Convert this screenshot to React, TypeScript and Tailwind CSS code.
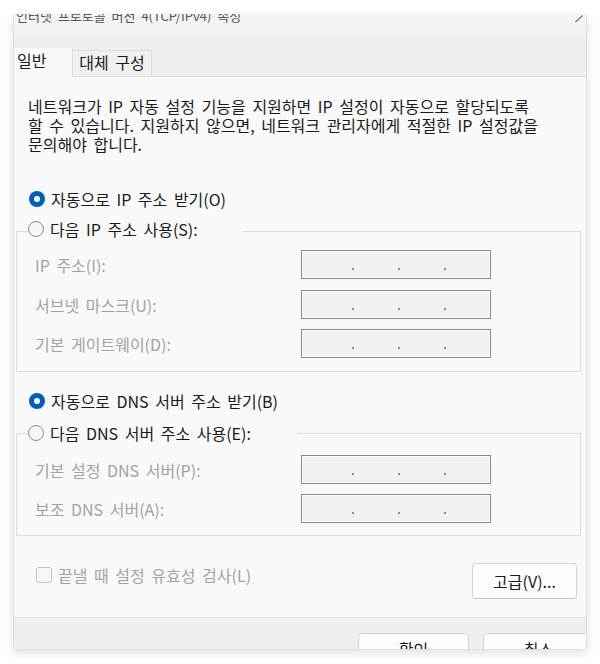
import React from 'react'

const FONT = "font-['Noto_Sans_CJK_KR','Noto_Sans',sans-serif] [word-spacing:3px]"

function Radio({ checked }: { checked: boolean }) {
  if (checked) {
    return (
      <span className="flex h-4 w-4 flex-shrink-0 items-center justify-center rounded-full bg-[#005fb8]">
        <span className="h-[6px] w-[6px] rounded-full bg-white" />
      </span>
    )
  }
  return <span className="h-4 w-4 flex-shrink-0 rounded-full border border-[#8b8b8b] bg-[#f6f6f6]" />
}

function IpBox() {
  return (
    <div className="flex h-[29px] w-[190px] items-end gap-[44px] border border-[#8a8a8a] bg-[#f0f0f0] pb-[8px] pl-[50px] shadow-[inset_-1px_-1px_0_#ffffff,inset_1px_1px_0_#ffffff]">
      <span className="h-[2px] w-[2px] bg-[#8c8c8c]" />
      <span className="h-[2px] w-[2px] bg-[#8c8c8c]" />
      <span className="h-[2px] w-[2px] bg-[#8c8c8c]" />
    </div>
  )
}

function FieldRow({ label, className }: { label: string; className: string }) {
  return (
    <div className={`flex h-[29px] items-center ${className}`}>
      <span className="w-[266px] text-[16px] leading-[22px] text-[#a2a2a2]">{label}</span>
      <IpBox />
    </div>
  )
}

function Legend({ text, gapRight, className }: { text: string; gapRight: string; className: string }) {
  return (
    <div className={`flex h-[22px] items-center ${className}`}>
      <div className={`flex h-[22px] items-center gap-[6px] bg-[#f9f9f9] ${gapRight}`}>
        <Radio checked={false} />
        <span className="text-[16px] leading-[22px] text-[#1a1a1a]">{text}</span>
      </div>
    </div>
  )
}

export default function App() {
  return (
    <div className={`h-[664px] w-[600px] overflow-hidden bg-white pl-[13px] pt-[14px] ${FONT}`}>
      <div className="flex h-[636px] w-[574px] flex-col overflow-hidden rounded-[4px] border-x border-b border-[#dedede] shadow-[0_3px_10px_rgba(0,0,0,0.13)]">
        {/* title bar, cut off at the top */}
        <div className="flex h-[22px] flex-shrink-0 justify-between overflow-hidden bg-[#f3f3f3]">
          <span className="-mt-[6px] pl-[2px] text-[13px] leading-[16px] text-[#555555]">
            인터넷 프로토콜 버전 4(TCP/IPv4) 속성
          </span>
          <svg className="mr-[2px] mt-[1px] h-[8px] w-[10px]" viewBox="0 0 10 8">
            <path d="M1.5 7 L8.5 0.5" stroke="#777" strokeWidth="1.2" fill="none" />
          </svg>
        </div>

        {/* tabs */}
        <div className="flex h-[41px] flex-shrink-0 items-end bg-[#eeeeee]">
          <div className="h-[29px] w-[59px] border-r border-[#dcdcdc] bg-[#f9f9f9] pl-[3px] pt-px text-[16px] leading-[22px] text-[#1a1a1a]">
            일반
          </div>
          <div className="h-[27px] w-[79px] border-b border-r border-t border-[#dcdcdc] bg-[#f0f0f0] text-center text-[16px] leading-[22px] text-[#1a1a1a]">
            대체 구성
          </div>
          <div className="h-px flex-1 bg-[#dcdcdc]" />
        </div>

        {/* general tab content */}
        <div className="flex h-[540px] flex-shrink-0 flex-col bg-[#f9f9f9]">
          <p className="pl-[14px] pt-[20px] text-[16px] leading-[19px] text-[#1a1a1a]">
            네트워크가 IP 자동 설정 기능을 지원하면 IP 설정이 자동으로 할당되도록
            <br />
            할 수 있습니다. 지원하지 않으면, 네트워크 관리자에게 적절한 IP 설정값을
            <br />
            문의해야 합니다.
          </p>

          <div className="ml-[15px] mt-[34px] flex h-[22px] items-center gap-[6px]">
            <Radio checked />
            <span className="text-[16px] leading-[22px] text-[#1a1a1a]">자동으로 IP 주소 받기(O)</span>
          </div>

          <div className="ml-[2px] mr-[5px] mt-[21px] border border-[#dcdcdc] pb-[13px] pl-[18px]">
            <Legend text="다음 IP 주소 사용(S):" gapRight="pr-[44px]" className="-ml-[7px] -mt-[14px]" />
            <FieldRow label="IP 주소(I):" className="mt-[10px]" />
            <FieldRow label="서브넷 마스크(U):" className="mt-[11px]" />
            <FieldRow label="기본 게이트웨이(D):" className="mt-[10px]" />
          </div>

          <div className="ml-[15px] mt-[18px] flex h-[22px] items-center gap-[6px]">
            <Radio checked />
            <span className="text-[16px] leading-[22px] text-[#1a1a1a]">자동으로 DNS 서버 주소 받기(B)</span>
          </div>

          <div className="ml-[2px] mr-[5px] mt-[21px] border border-[#dcdcdc] pb-[12px] pl-[18px]">
            <Legend text="다음 DNS 서버 주소 사용(E):" gapRight="pr-[46px]" className="-ml-[7px] -mt-[12px]" />
            <FieldRow label="기본 설정 DNS 서버(P):" className="mt-[11px]" />
            <FieldRow label="보조 DNS 서버(A):" className="mt-[10px]" />
          </div>

          <div className="mt-[27px] flex items-start justify-between pl-[22px] pr-[9px]">
            <div className="mt-px flex h-[22px] items-center gap-[6px]">
              <span className="h-4 w-4 rounded-[3px] border border-[#c4c4c4] bg-[#f7f7f7]" />
              <span className="text-[16px] leading-[22px] text-[#a2a2a2]">끝낼 때 설정 유효성 검사(L)</span>
            </div>
            <button className="h-[36px] w-[105px] rounded-[4px] border border-[#d3d3d3] border-b-[#c2c2c2] bg-[#fdfdfd] text-[16px] leading-[22px] text-[#1a1a1a] [word-spacing:0px]">
              고급(V)...
            </button>
          </div>
        </div>

        {/* footer buttons, cut off at the bottom */}
        <div className="flex flex-1 gap-[14px] overflow-hidden border-t border-[#e4e4e4] bg-[#efefef] pl-[344px] pt-[15px]">
          <button className="h-[32px] w-[111px] flex-shrink-0 rounded-[4px] border border-[#d3d3d3] bg-[#fdfdfd] text-[16px] leading-[22px] text-[#1a1a1a]">
            확인
          </button>
          <button className="h-[32px] w-[111px] flex-shrink-0 rounded-[4px] border border-[#d3d3d3] bg-[#fdfdfd] text-[16px] leading-[22px] text-[#1a1a1a]">
            취소
          </button>
        </div>
      </div>
    </div>
  )
}
